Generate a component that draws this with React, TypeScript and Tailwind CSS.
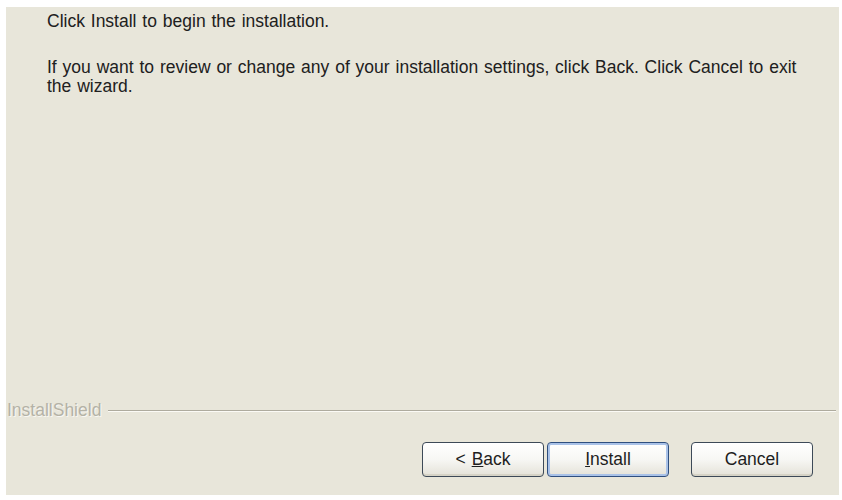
import React from 'react';

type BtnProps = {
  children: React.ReactNode;
  primary?: boolean;
};

function WizardButton({ children, primary }: BtnProps) {
  return (
    <button
      className={`w-[122px] h-[35px] rounded-[4px] border flex items-center justify-center text-[17.5px] text-[#1e1e1e] bg-gradient-to-b from-white via-[#f7f7f4] to-[#e4e2d8] ${
        primary
          ? 'border-[#2f4f7f] shadow-[inset_0_0_0_2px_#a9c2e8]'
          : 'border-[#3d4a58] shadow-[inset_0_-2px_0_#d6d3c6]'
      }`}
    >
      {children}
    </button>
  );
}

export default function App() {
  return (
    <div
      className="w-[842px] h-[500px] bg-white pt-[7px] pl-[6px] pr-[3px] pb-[5px]"
      style={{ fontFamily: '"Liberation Sans", Arial, sans-serif' }}
    >
      <div className="h-full bg-[#e8e6da] flex flex-col">
        {/* message text */}
        <div className="pl-[41px] pt-[5px] text-[17.5px] leading-[19px] text-[#202020] [word-spacing:1px]">
          <p>Click Install to begin the installation.</p>
          <p className="mt-[27px] whitespace-nowrap">
            If you want to review or change any of your installation settings, click Back. Click Cancel to exit
            <br />
            the wizard.
          </p>
        </div>

        <div className="flex-1" />

        {/* branding divider */}
        <div className="flex items-center pl-[1px] pr-[3px]">
          <span className="text-[17.5px] leading-[19px] text-[#b4b2a6] [text-shadow:1px_1px_0_#f8f7f2]">
            InstallShield
          </span>
          <div className="flex-1 ml-[7px] mt-[1px] border-t border-[#aeab9e] border-b border-b-[#fbfaf5]" />
        </div>

        {/* wizard buttons */}
        <div className="flex justify-end items-center pt-[22px] pb-[18px] pr-[26px]">
          <WizardButton>
            &lt;<span className="underline ml-[6px]">B</span>ack
          </WizardButton>
          <div className="w-[3px]" />
          <WizardButton primary>
            <span className="underline">I</span>nstall
          </WizardButton>
          <div className="w-[22px]" />
          <WizardButton>Cancel</WizardButton>
        </div>
      </div>
    </div>
  );
}
